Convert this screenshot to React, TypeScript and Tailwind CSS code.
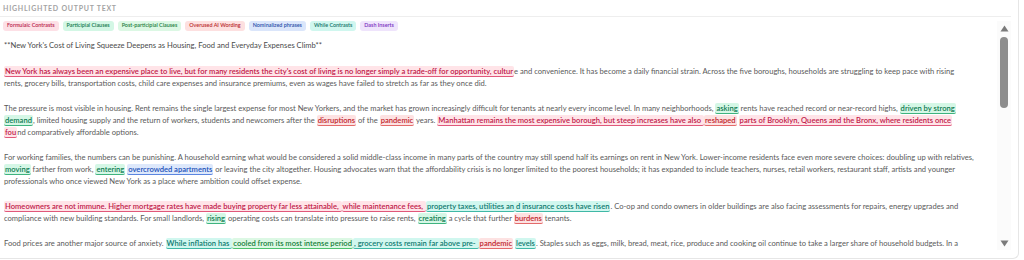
import React from "react";

type K = "F" | "P" | "S" | "O" | "N" | "W" | "D";

const HL: Record<K, string> = {
  F: "bg-[#ffe4e8] text-[#c01848] border-b border-[#e0587a]",
  P: "bg-[#d5f7e6] text-[#0d7a50] border-b border-[#3fb37f]",
  S: "bg-[#dcf8e4] text-[#16803c] border-b border-[#4cc26e]",
  O: "bg-[#fde2e2] text-[#c0262d] border-b border-[#e36a6a]",
  N: "bg-[#dde8fb] text-[#2050b8] border-b border-[#5b86e0]",
  W: "bg-[#d0f7ef] text-[#0f7a70] border-b border-[#3fb8a6]",
  D: "bg-[#f1e6fd] text-[#7c2bc7] border-b border-[#a66ce8]",
};

const CHIP: Record<K, string> = {
  F: "bg-[#fde0e6] text-[#b8224c]",
  P: "bg-[#d3f7e5] text-[#14774d]",
  S: "bg-[#dcf8e4] text-[#1c7d3e]",
  O: "bg-[#fde0e0] text-[#b8282c]",
  N: "bg-[#dbe6fb] text-[#2a4fa8]",
  W: "bg-[#d0f7ef] text-[#137469]",
  D: "bg-[#efe4fc] text-[#7b30c0]",
};

function H({ k, children }: { k: K; children: React.ReactNode }) {
  return <span className={`${HL[k]} rounded-[2px] px-[1px] font-semibold`}>{children}</span>;
}

const chips: [K, string][] = [
  ["F", "Formulaic Contrasts"],
  ["P", "Participial Clauses"],
  ["S", "Post-participial Clauses"],
  ["O", "Overused AI Wording"],
  ["N", "Nominalized phrases"],
  ["W", "While Contrasts"],
  ["D", "Dash Inserts"],
];

export default function App() {
  return (
    <div className="w-[1019px] h-[259px] bg-white border-r border-b border-[#e6e6e6] rounded-br-[6px] overflow-hidden font-['Lato','Open_Sans',sans-serif]">
      <div className="w-[1011px] h-[17px] border-b border-[#eeeeee] pl-[3px] flex items-center">
        <span className="text-[7px] font-bold tracking-[0.75px] text-[#a3a3a3] leading-none pt-[1px]">
          HIGHLIGHTED OUTPUT TEXT
        </span>
      </div>
      <div className="flex w-[1011px] h-[236px]">
        <div className="flex-1 overflow-hidden pl-[3px] pt-[4px]">
          <div className="flex gap-[4px] h-[10px]">
            {chips.map(([k, t]) => (
              <span
                key={k}
                className={`${CHIP[k]} rounded-[3px] h-[10px] px-[4px] flex items-center text-[5.4px] font-semibold leading-none whitespace-nowrap`}
              >
                {t}
              </span>
            ))}
          </div>
          <div className="text-[7.6px] leading-[12px] text-[#5a5a5a] whitespace-nowrap pl-[1px]">
            <p className="mt-[8px] mb-[14px] text-[#4a4a4a]">
              **New York's Cost of Living Squeeze Deepens as Housing, Food and Everyday Expenses Climb**
            </p>
            <p className="mb-[13px]">
              <H k="F">
                New York has always been an expensive place to live, but for many residents the city's cost of living is no longer simply a trade-off for opportunity, cultur
              </H>
              e and convenience. It has become a daily financial strain. Across the five boroughs, households are struggling to keep pace with rising
              <br />
              rents, grocery bills, transportation costs, child care expenses and insurance premiums, even as wages have failed to stretch as far as they once did.
            </p>
            <p className="mb-[13px]">
              The pressure is most visible in housing. Rent remains the single largest expense for most New Yorkers, and the market has grown increasingly difficult for tenants at nearly every income level. In many neighborhoods,{" "}
              <H k="P">asking</H> rents have reached record or near-record highs, <H k="P">driven by strong </H>
              <br />
              <H k="P">demand</H>, limited housing supply and the return of workers, students and newcomers after the{" "}
              <H k="O">disruptions</H> of the <H k="O">pandemic</H> years.{" "}
              <H k="F">Manhattan remains the most expensive borough, but steep increases have also </H>{" "}
              <H k="O">reshaped</H> <H k="F"> parts of Brooklyn, Queens and the Bronx, where residents once </H>
              <br />
              <H k="F">fou</H>nd comparatively affordable options.
            </p>
            <p className="mb-[13px]">
              For working families, the numbers can be punishing. A household earning what would be considered a solid middle-class income in many parts of the country may still spend half its earnings on rent in New York. Lower-income residents face even more severe choices: doubling up with relatives,
              <br />
              <H k="P">moving</H> farther from work, <H k="P">entering</H> <H k="N">overcrowded apartments</H> or leaving the city altogether. Housing advocates warn that the affordability crisis is no longer limited to the poorest households; it has expanded to include teachers, nurses, retail workers, restaurant staff, artists and younger
              <br />
              professionals who once viewed New York as a place where ambition could offset expense.
            </p>
            <p className="mb-[13px]">
              <H k="F">Homeowners are not immune. Higher mortgage rates have made buying property far less attainable, </H>
              <H k="F"> while maintenance fees, </H>
              <H k="W">property taxes, utilities an</H>
              <H k="W">d insurance costs have risen</H>. Co-op and condo owners in older buildings are also facing assessments for repairs, energy upgrades and
              <br />
              compliance with new building standards. For small landlords, <H k="P">rising</H> operating costs can translate into pressure to raise rents,{" "}
              <H k="P">creating</H> a cycle that further <H k="O">burdens</H> tenants.
            </p>
            <p>
              Food prices are another major source of anxiety. <H k="W">While inflation has </H>
              <H k="S"> cooled from its most intense period</H>
              <H k="W">, grocery costs remain far above pre- </H>
              <H k="O">pandemic</H> <H k="W"> levels</H>. Staples such as eggs, milk, bread, meat, rice, produce and cooking oil continue to take a larger share of household budgets. In a
            </p>
          </div>
        </div>
        <div className="w-[14px] h-[229px] mt-[4px] bg-[#fbfbfb] flex flex-col items-center pt-[4px] pb-[3px]">
          <svg width="9" height="7" viewBox="0 0 9 7">
            <path d="M4.5 0.5 L8.5 6.5 L0.5 6.5 Z" fill="#7a7a7a" />
          </svg>
          <div className="w-[8px] h-[71px] mt-[5px] rounded-full bg-[#8d8d8d]" />
          <div className="flex-1" />
          <svg width="9" height="7" viewBox="0 0 9 7">
            <path d="M0.5 0.5 L8.5 0.5 L4.5 6.5 Z" fill="#7a7a7a" />
          </svg>
        </div>
      </div>
    </div>
  );
}
